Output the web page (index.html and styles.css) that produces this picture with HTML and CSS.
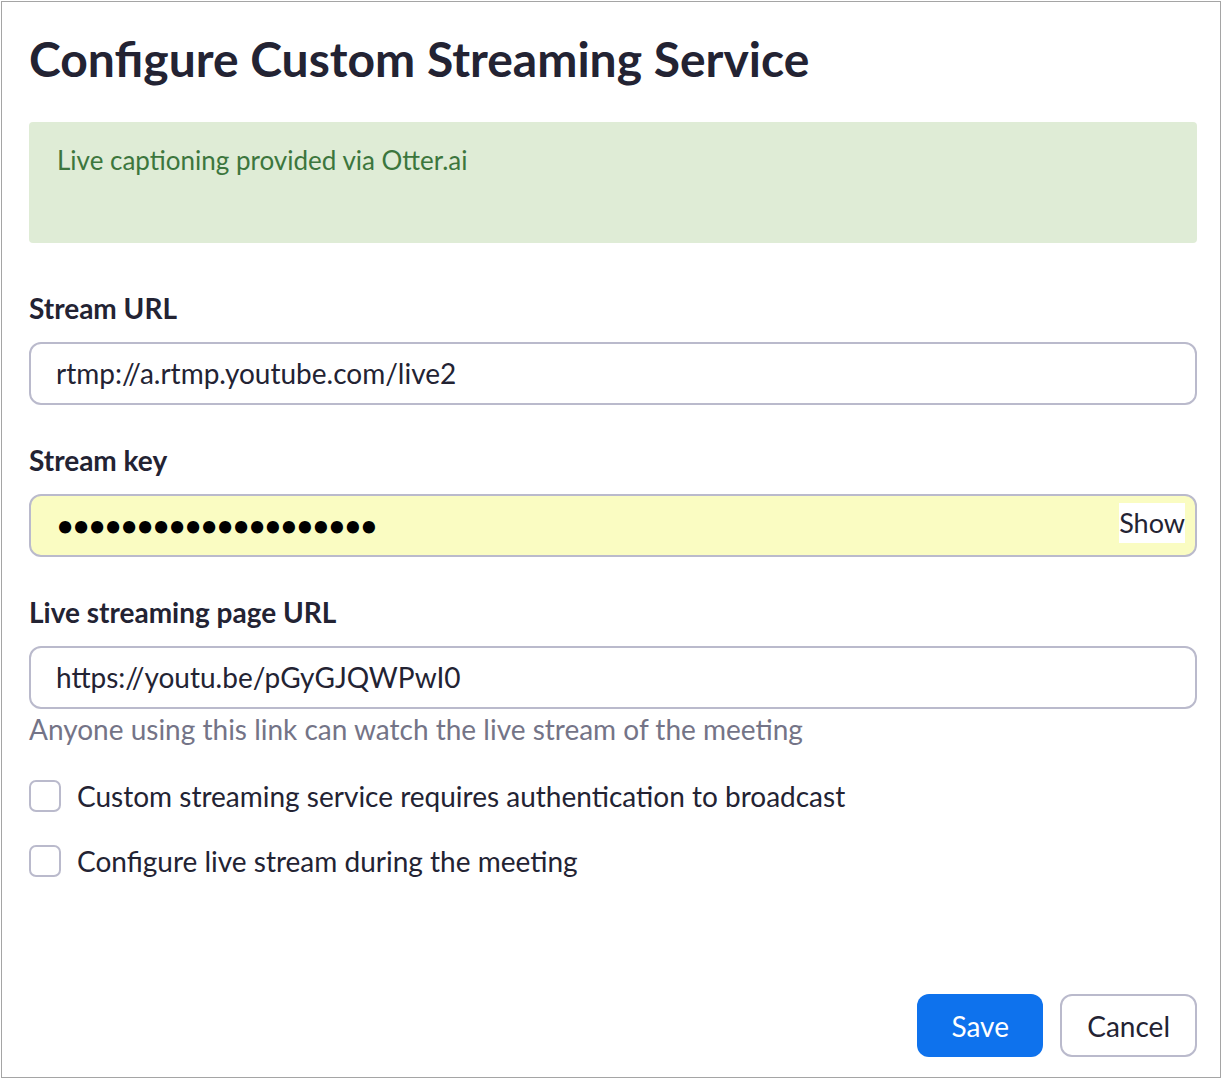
FILE: index.html
```html
<!DOCTYPE html>
<html lang="en">
<head>
<meta charset="utf-8">
<title>Configure Custom Streaming Service</title>
<link rel="stylesheet" href="styles.css">
</head>
<body>
<div class="dialog">
  <h1 class="title">Configure Custom Streaming Service</h1>
  <div class="alert">Live captioning provided via Otter.ai</div>

  <div class="field">
    <label class="label">Stream URL</label>
    <div class="input">rtmp://a.rtmp.youtube.com/live2</div>
  </div>

  <div class="field">
    <label class="label">Stream key</label>
    <div class="input input-autofill">
      <span class="dots">••••••••••••••••••••</span>
      <span class="show">Show</span>
    </div>
  </div>

  <div class="field">
    <label class="label">Live streaming page URL</label>
    <div class="input">https://youtu.be/pGyGJQWPwI0</div>
    <p class="hint">Anyone using this link can watch the live stream of the meeting</p>
  </div>

  <div class="checks">
    <label class="check"><span class="box"></span><span>Custom streaming service requires authentication to broadcast</span></label>
    <label class="check"><span class="box"></span><span>Configure live stream during the meeting</span></label>
  </div>

  <div class="actions">
    <button class="btn btn-primary">Save</button>
    <button class="btn btn-default">Cancel</button>
  </div>
</div>
</body>
</html>
```

FILE: styles.css
```css
* { box-sizing: border-box; }
html, body { margin: 0; padding: 0; background: #fff; }
body { font-family: Lato, "Noto Sans", sans-serif; color: #232333; }
.dialog {
  width: 1220px;
  height: 1077px;
  margin: 1px 0 0 1px;
  border: 1px solid #a5a5a5;
  padding: 0 23px 0 27px;
  display: flex;
  flex-direction: column;
}
.title { margin: 28px 0 0 0; font-size: 48px; font-weight: 700; line-height: 1.2; }
.alert {
  margin-top: 34px;
  height: 121px;
  background: #dfecd6;
  color: #3c763d;
  border-radius: 4px;
  padding: 23px 28px 0;
  font-size: 26px;
  line-height: 1.2;
}
.field { display: flex; flex-direction: column; }
.label { font-size: 28px; font-weight: 700; line-height: 34px; margin: 48px 0 17px; }
.field + .field .label { margin-top: 38px; }
.input {
  height: 63px;
  border: 2px solid #babacc;
  border-radius: 12px;
  padding: 0 10px 0 25px;
  display: flex;
  align-items: center;
  font-size: 28px;
}
.input-autofill { background: #fafcc2; justify-content: space-between; }
.dots { font-size: 28px; font-weight: 700; color: #000; letter-spacing: -0.25px; padding-left: 1px; }
.show { background: #fff; font-size: 27px; line-height: 40px; display: inline-block; margin-top: -4px; }
.hint { margin: 3px 0 0; color: #747487; font-size: 28px; line-height: 34px; }
.checks { display: flex; flex-direction: column; gap: 31px; margin-top: 33px; }
.check { display: flex; align-items: center; gap: 16px; font-size: 28px; line-height: 34px; }
.box { width: 32px; height: 32px; border: 2px solid #babacc; border-radius: 7px; flex: none; }
.actions { margin-top: auto; margin-bottom: 20px; display: flex; justify-content: flex-end; gap: 17px; }
.btn { height: 63px; border-radius: 12px; font-family: Lato, sans-serif; font-size: 28px; padding: 0 25px; min-width: 126px; }
.btn-primary { background: #0e72ed; color: #fff; border: none; }
.btn-default { background: #fff; color: #232333; border: 2px solid #babacc; }
```
